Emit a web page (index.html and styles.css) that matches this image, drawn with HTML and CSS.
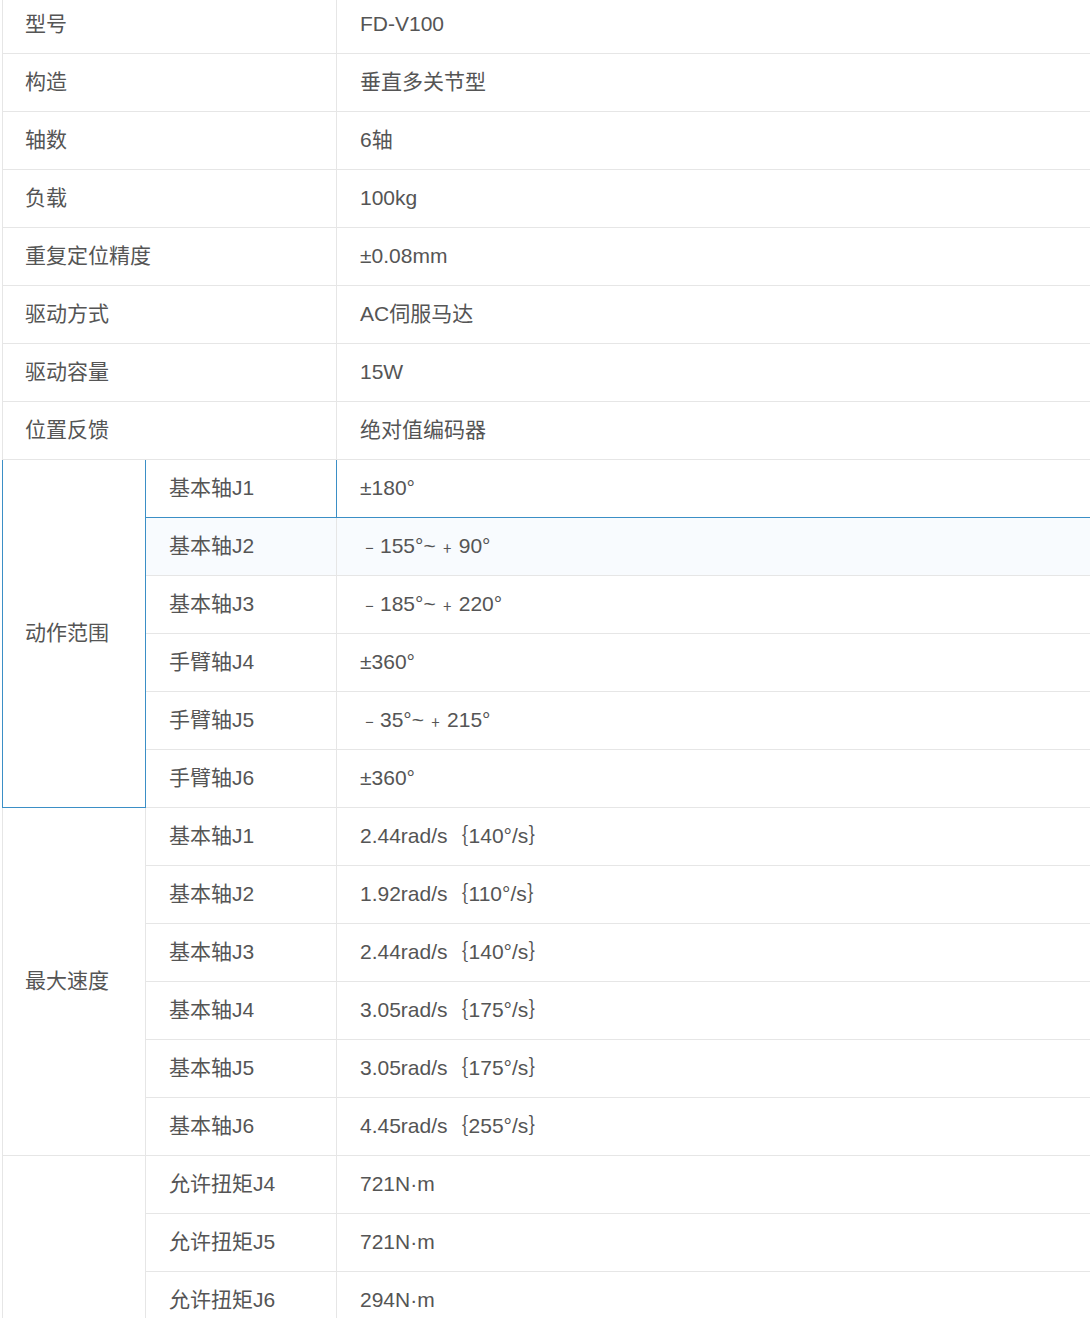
FILE: index.html
```html
<!DOCTYPE html>
<html lang="zh-CN">
<head>
<meta charset="utf-8">
<title>FD-V100</title>
<link rel="stylesheet" href="styles.css">
</head>
<body>
<table class="spec">
  <colgroup>
    <col class="c1"><col class="c2"><col class="c3">
  </colgroup>
  <tbody>
    <tr><td colspan="2">型号</td><td>FD-V100</td></tr>
    <tr><td colspan="2">构造</td><td>垂直多关节型</td></tr>
    <tr><td colspan="2">轴数</td><td>6轴</td></tr>
    <tr><td colspan="2">负载</td><td>100kg</td></tr>
    <tr><td colspan="2">重复定位精度</td><td>±0.08mm</td></tr>
    <tr><td colspan="2">驱动方式</td><td>AC伺服马达</td></tr>
    <tr><td colspan="2">驱动容量</td><td>15W</td></tr>
    <tr><td colspan="2">位置反馈</td><td>绝对值编码器</td></tr>
    <tr class="active"><td rowspan="6">动作范围</td><td>基本轴J1</td><td>±180°</td></tr>
    <tr class="hl"><td>基本轴J2</td><td><span class="sg">﹣</span>155°~<span class="sg sp">﹢</span>90°</td></tr>
    <tr><td>基本轴J3</td><td><span class="sg">﹣</span>185°~<span class="sg sp">﹢</span>220°</td></tr>
    <tr><td>手臂轴J4</td><td>±360°</td></tr>
    <tr><td>手臂轴J5</td><td><span class="sg">﹣</span>35°~<span class="sg sp">﹢</span>215°</td></tr>
    <tr><td>手臂轴J6</td><td>±360°</td></tr>
    <tr><td rowspan="6">最大速度</td><td>基本轴J1</td><td>2.44rad/s｛140°/s｝</td></tr>
    <tr><td>基本轴J2</td><td>1.92rad/s｛110°/s｝</td></tr>
    <tr><td>基本轴J3</td><td>2.44rad/s｛140°/s｝</td></tr>
    <tr><td>基本轴J4</td><td>3.05rad/s｛175°/s｝</td></tr>
    <tr><td>基本轴J5</td><td>3.05rad/s｛175°/s｝</td></tr>
    <tr><td>基本轴J6</td><td>4.45rad/s｛255°/s｝</td></tr>
    <tr><td rowspan="3"></td><td>允许扭矩J4</td><td>721N·m</td></tr>
    <tr><td>允许扭矩J5</td><td>721N·m</td></tr>
    <tr><td>允许扭矩J6</td><td>294N·m</td></tr>
  </tbody>
</table>
</body>
</html>
```

FILE: styles.css
```css
html, body {
  margin: 0;
  padding: 0;
  background: #fff;
  overflow: hidden;
}

.spec {
  border-collapse: collapse;
  margin: -5px 0 0 2px;
  width: 1100px;
  table-layout: fixed;
  font-family: "Liberation Sans", "Noto Sans CJK SC", sans-serif;
  font-size: 21px;
  line-height: 24px;
  color: #555;
}

.c1 { width: 143px; }
.c2 { width: 191px; }

.spec td {
  border: 1px solid #e6e6e6;
  height: 58px;
  padding: 0 0 1px 23px;
  vertical-align: middle;
  white-space: nowrap;
  box-sizing: border-box;
}

.spec td:first-child {
  padding-left: 22px;
}

.spec tr.hl td:first-child,
.spec tr.hl ~ tr td:first-child:not([rowspan]) {
  padding-left: 23px;
}

.spec tr.active td {
  border-color: #3b8fc6;
}

.spec tr.hl td {
  background: #f8fbfe;
}

.sg {
  font-size: 19px;
  margin: 0 1px 0 0;
}

.sg.sp {
  margin: 0 2px 0 2px;
}
```
